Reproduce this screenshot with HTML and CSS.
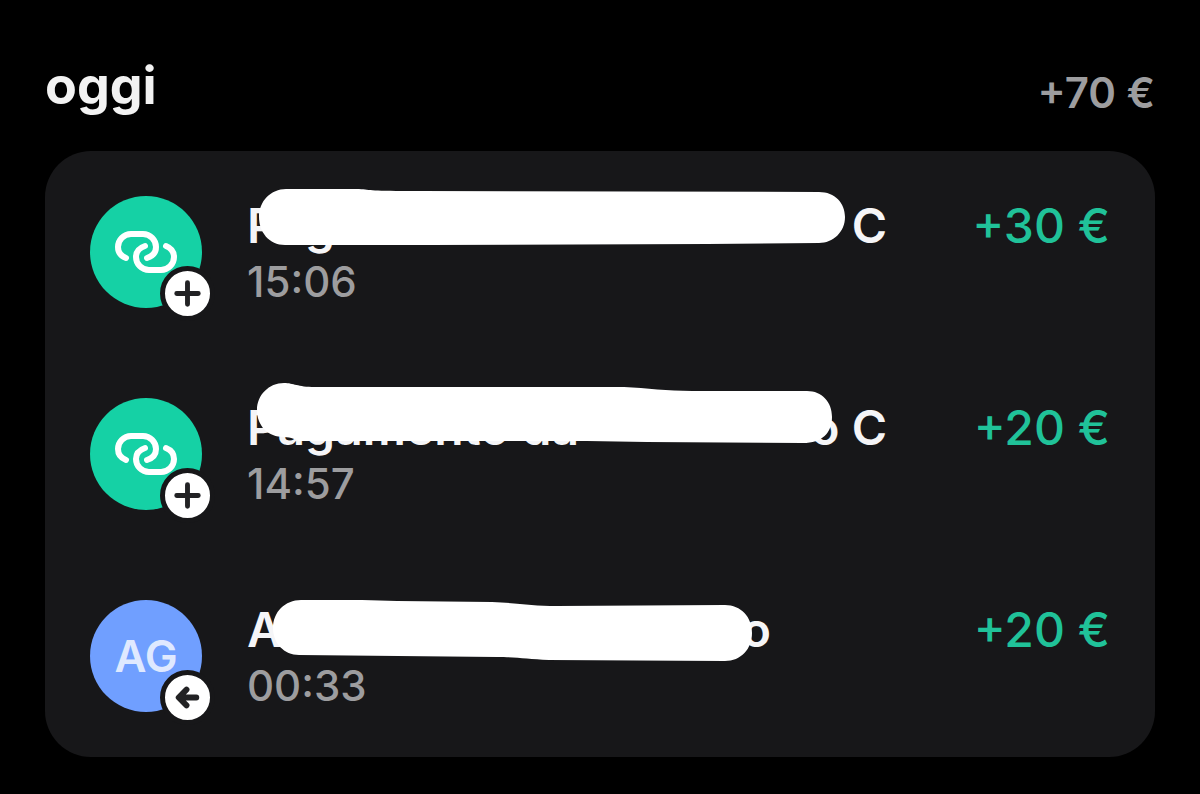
FILE: index.html
```html
<!DOCTYPE html>
<html lang="it">
<head>
  <meta charset="UTF-8">
  <meta name="viewport" content="width=device-width, initial-scale=1.0">
  <title>Movimenti</title>
  <link rel="stylesheet" href="styles.css">
</head>
<body>
  <main class="day">
    <div class="day-header">
      <h2>oggi</h2>
      <span class="total">+70 €</span>
    </div>

    <ul class="card">
      <li class="row">
        <div class="avatar link">
          <svg class="link-icon" viewBox="0 0 112 112" aria-hidden="true">
            <path d="M36 62C31 60 28 56 28 51A13 13 0 0 1 41 38H53A13 13 0 0 1 66 51C66 56 63 60 57 62"/>
            <path d="M76 50C81 52 84 56 84 61A13 13 0 0 1 71 74H59A13 13 0 0 1 46 61C46 56 49 52 55 50"/>
          </svg>
          <span class="badge">
            <svg viewBox="0 0 46 46" aria-hidden="true"><path d="M23 12V34M12 23H34"/></svg>
          </span>
        </div>
        <div class="info">
          <div class="name"><span>Pag</span><span>C</span></div>
          <div class="time">15:06</div>
          <svg class="marker" viewBox="0 0 640 90" aria-hidden="true">
            <path d="M39 13L112 13C125 14 122 15 172 15L572 16C588 16 598 27 598 41C598 56 586 67 572 67L460 68L182 69L38 69C22 69 12 56 12 41C12 25 24 13 39 13Z"/>
          </svg>
        </div>
        <div class="amount">+30 €</div>
      </li>

      <li class="row">
        <div class="avatar link">
          <svg class="link-icon" viewBox="0 0 112 112" aria-hidden="true">
            <path d="M36 62C31 60 28 56 28 51A13 13 0 0 1 41 38H53A13 13 0 0 1 66 51C66 56 63 60 57 62"/>
            <path d="M76 50C81 52 84 56 84 61A13 13 0 0 1 71 74H59A13 13 0 0 1 46 61C46 56 49 52 55 50"/>
          </svg>
          <span class="badge">
            <svg viewBox="0 0 46 46" aria-hidden="true"><path d="M23 12V34M12 23H34"/></svg>
          </span>
        </div>
        <div class="info">
          <div class="name"><span>Pagamento da</span><span>o C</span></div>
          <div class="time">14:57</div>
          <svg class="marker" viewBox="0 0 640 90" aria-hidden="true">
            <path d="M37 5C47 5 50 9 68 9L377 9C400 10 420 13 445 13L560 13C575 13 585 24 585 39C585 55 575 65 556 65L400 64L340 63L52 63C50 62 44 59 37 59C21 59 10 48 10 32C10 17 22 5 37 5Z"/>
          </svg>
        </div>
        <div class="amount">+20 €</div>
      </li>

      <li class="row">
        <div class="avatar initials">
          AG
          <span class="badge">
            <svg class="arrow" viewBox="0 0 46 46" aria-hidden="true"><path d="M32 23H15M22 15L14 23L22 31"/></svg>
          </span>
        </div>
        <div class="info">
          <div class="name short"><span>A</span><span>o</span></div>
          <div class="time">00:33</div>
          <svg class="marker" viewBox="0 0 640 90" aria-hidden="true">
            <path d="M54 20L115 20L150 21L245 22C270 23 285 26 310 26L478 25C494 25 505 37 505 53C505 69 494 81 478 81L302 80C280 79 270 77 250 77L52 75C37 75 26 63 26 48C26 32 38 20 54 20Z"/>
          </svg>
        </div>
        <div class="amount">+20 €</div>
      </li>
    </ul>
  </main>
</body>
</html>
```
FILE: styles.css
```css
* {
  margin: 0;
  padding: 0;
  box-sizing: border-box;
}

body {
  font-family: Inter, "Liberation Sans", sans-serif;
  background-color: #000;
  color: #f5f5f7;
}

.day {
  padding: 54px 45px 36px;
}

.day-header {
  display: flex;
  justify-content: space-between;
  align-items: flex-end;
  margin-bottom: 33px;
}

h2 {
  font-size: 52px;
  line-height: 64px;
  font-weight: 700;
  color: #f2f2f2;
}

.total {
  font-size: 42px;
  line-height: 50px;
  font-weight: 600;
  color: #9d9d9f;
}

.card {
  list-style: none;
  background-color: #171719;
  border-radius: 46px;
}

.row {
  display: flex;
  align-items: flex-start;
  padding: 45px;
}

.avatar {
  position: relative;
  flex: none;
  display: flex;
  justify-content: center;
  align-items: center;
  width: 112px;
  height: 112px;
  margin-right: 45px;
  border-radius: 50%;
}

.avatar.link {
  background-color: #15d1a5;
}

.avatar.initials {
  background-color: #709fff;
  color: #dfe9ff;
  font-size: 44px;
  font-weight: 600;
}

.link-icon {
  width: 100%;
  fill: none;
  stroke: #fff;
  stroke-width: 6;
  stroke-linecap: round;
}

/* small round mark on the corner of the avatar */
.badge {
  position: absolute;
  right: -13px;
  bottom: -13px;
  width: 55px;
  height: 55px;
  border: 5px solid #171719;
  border-radius: 50%;
  background-color: #fff;
}

.badge svg {
  display: block;
  fill: none;
  stroke: #222224;
  stroke-width: 5;
  stroke-linecap: round;
  stroke-linejoin: round;
}

.badge .arrow {
  stroke-width: 6;
}

.info {
  position: relative;
  flex: 1;
}

.name {
  display: flex;
  justify-content: space-between;
  max-width: 640px;
  font-size: 48px;
  line-height: 60px;
  font-weight: 600;
}

.name.short {
  max-width: 524px;
}

.time {
  font-size: 42px;
  line-height: 52px;
  font-weight: 500;
  color: #9d9d9f;
}

/* marker stroke drawn over the name */
.marker {
  position: absolute;
  left: 0;
  top: -20px;
  width: 640px;
  fill: #fff;
}

.amount {
  font-size: 48px;
  line-height: 60px;
  font-weight: 500;
  color: #20c299;
  white-space: nowrap;
}
```
